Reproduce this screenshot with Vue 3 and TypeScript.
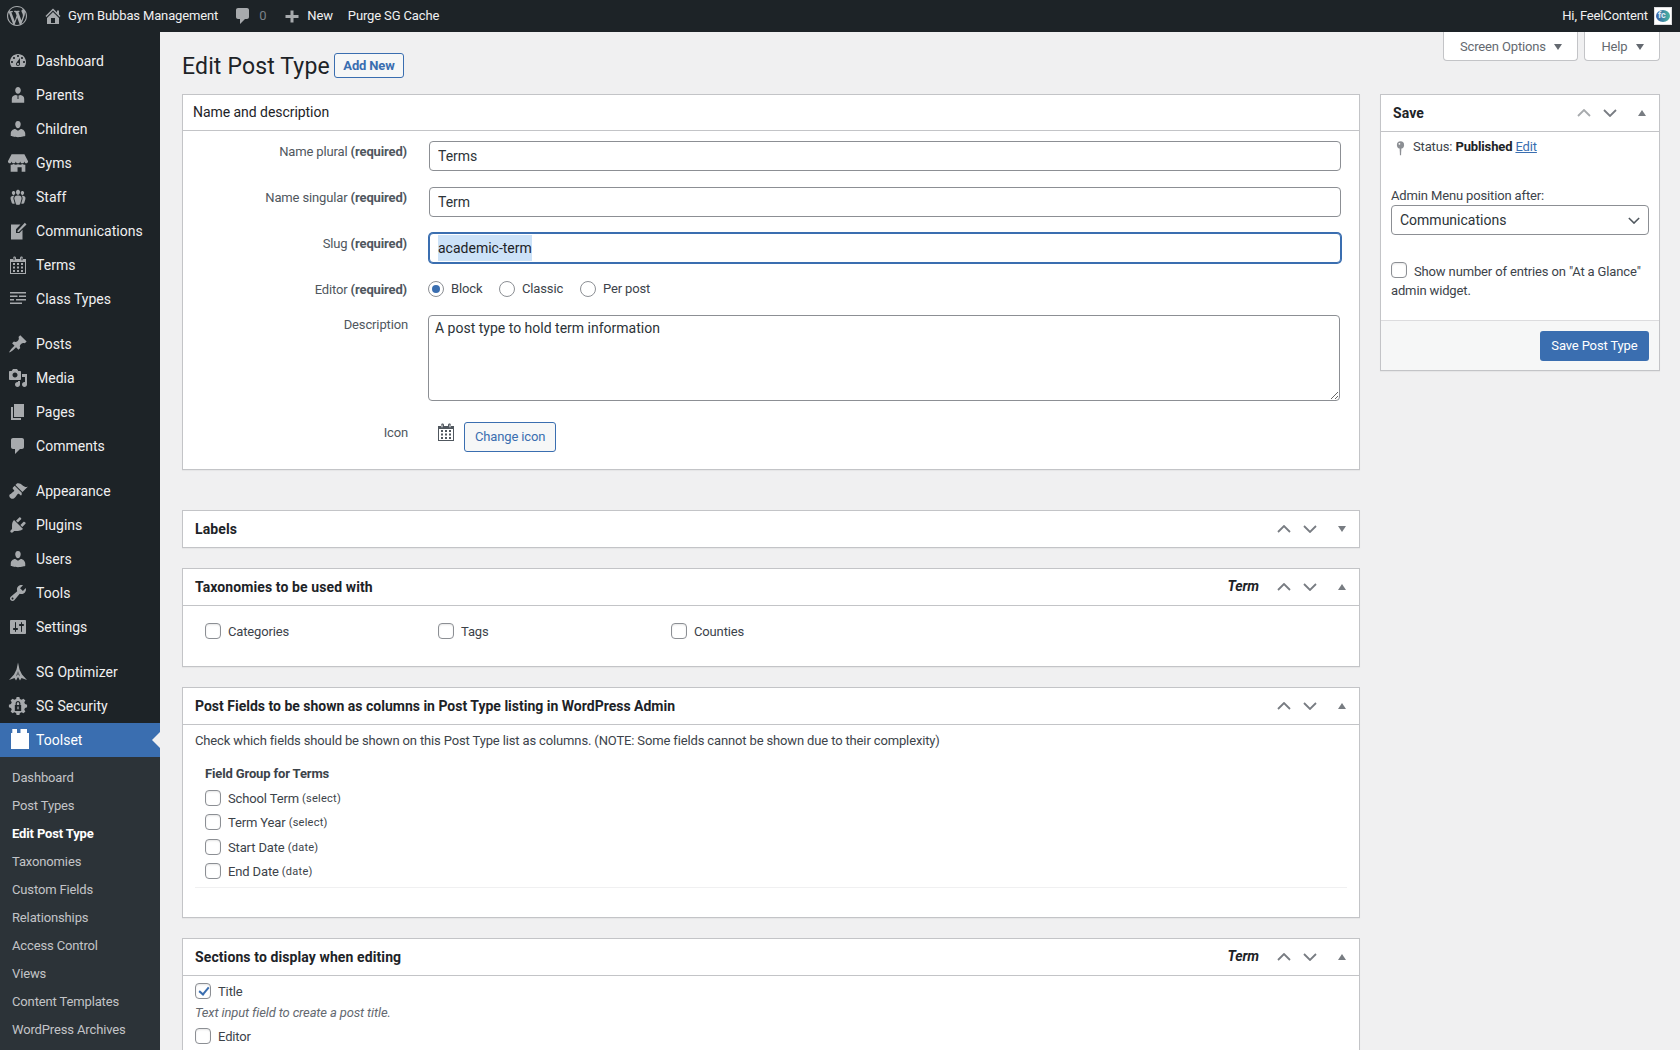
<script setup lang="ts">
interface MenuItem {
  label: string
  d: string
  gap?: boolean
  box?: string
}
const users = 'M10 9.25c-2.27 0-2.73-3.44-2.73-3.44C7 4.02 7.82 2 9.97 2c2.16 0 2.98 2.02 2.71 3.81 0 0-.41 3.44-2.68 3.44zm0 2.57L12.72 10c2.39 0 4.52 2.33 4.52 4.53v2.49s-3.65 1.13-7.24 1.13c-3.65 0-7.24-1.13-7.24-1.13v-2.49c0-2.25 1.94-4.48 4.47-4.48z'
const calendar = 'M15 4h3v15H2V4h3V3c0-.41.15-.76.44-1.06.29-.29.65-.44 1.06-.44s.77.15 1.06.44c.29.3.44.65.44 1.06v1h4V3c0-.41.15-.76.44-1.06.29-.29.65-.44 1.06-.44s.77.15 1.06.44c.29.3.44.65.44 1.06v1zM6 5.5c.28 0 .5-.22.5-.5V3c0-.28-.22-.5-.5-.5s-.5.22-.5.5v2c0 .28.22.5.5.5zm8 0c.28 0 .5-.22.5-.5V3c0-.28-.22-.5-.5-.5s-.5.22-.5.5v2c0 .28.22.5.5.5zM17 18V7H3v11h14zM7 10V8H5v2h2zm4 0V8H9v2h2zm4 0V8h-2v2h2zM7 13.500v-2H5v2h2zm4 0v-2H9v2h2zm4 0v-2h-2v2h2zM7 17v-2H5v2h2zm4 0v-2H9v2h2zm4 0v-2h-2v2h2z'
const comment = 'M5 2h9c1.1 0 2 .9 2 2v7c0 1.1-.9 2-2 2h-2l-5 5v-5H5c-1.1 0-2-.9-2-2V4c0-1.1.9-2 2-2z'
const wp = 'M20 10c0-5.51-4.49-10-10-10C4.48 0 0 4.49 0 10c0 5.52 4.48 10 10 10 5.51 0 10-4.48 10-10zM7.780 15.370L4.370 6.220c.55-.02 1.170-.08 1.170-.08.5-.06.44-1.130-.06-1.110 0 0-1.450.11-2.370.11-.18 0-.37 0-.58-.01C4.120 2.690 6.870 1.110 10 1.110c2.330 0 4.450.87 6.050 2.340-.68-.11-1.650.39-1.650 1.580 0 .74.45 1.360.9 2.100.35.61.55 1.360.55 2.460 0 1.490-1.400 5-1.400 5l-3.030-8.370c.54-.02.82-.17.82-.17.5-.05.44-1.250-.06-1.220 0 0-1.440.12-2.380.12-.87 0-2.330-.12-2.330-.12-.5-.03-.56 1.200-.06 1.220l.92.08 1.260 3.410zM17.410 10c.24-.64.74-1.870.43-4.250.7 1.290 1.050 2.710 1.050 4.250 0 3.290-1.730 6.240-4.400 7.780.97-2.590 1.940-5.200 2.920-7.780zM6.100 18.090C3.120 16.650 1.110 13.530 1.110 10c0-1.300.23-2.480.72-3.590C3.250 10.300 4.670 14.200 6.100 18.090zm4.030-6.630l2.580 6.980c-.86.29-1.760.45-2.710.45-.79 0-1.570-.11-2.290-.33.81-2.380 1.620-4.740 2.420-7.100z'

const menu: MenuItem[] = [
  { label: 'Dashboard', d: 'M3.760 16h12.480c1.100-1.370 1.760-3.110 1.760-5 0-4.420-3.580-8-8-8s-8 3.580-8 8c0 1.890.66 3.630 1.760 5zM10 4c.55 0 1 .45 1 1s-.45 1-1 1-1-.45-1-1 .45-1 1-1zM6 6c.55 0 1 .45 1 1s-.45 1-1 1-1-.45-1-1 .45-1 1-1zm8 0c.55 0 1 .45 1 1s-.45 1-1 1-1-.45-1-1 .45-1 1-1zm-5.370 5.550L12 7v6c0 1.100-.9 2-2 2s-2-.9-2-2c0-.57.24-1.080.63-1.450zM4 10c.55 0 1 .45 1 1s-.45 1-1 1-1-.45-1-1 .45-1 1-1zm12 0c.55 0 1 .45 1 1s-.45 1-1 1-1-.45-1-1 .45-1 1-1zm-5 3c0-.55-.45-1-1-1s-1 .45-1 1 .45 1 1 1 1-.45 1-1z' },
  { label: 'Parents', d: 'M10 8.800c-1.900 0-2.800-1.900-2.800-3.500C7.200 3.500 8.400 2 10 2s2.800 1.500 2.800 3.300c0 1.600-.9 3.500-2.800 3.500zM7.500 10l2 .4v3.600h1v-3.600l2-.4c2.200.3 3.700 1.700 3.700 3.700v4.100H3.800v-4.100c0-2 1.500-3.400 3.700-3.700z' },
  { label: 'Children', d: users },
  { label: 'Gyms', d: 'M5 1h14l4 7.500c0 1.400-.9 2.300-2 2.300s-2-.9-2-2.300c0 1.400-.9 2.300-2.300 2.300S14.400 9.900 14.400 8.500c0 1.400-.9 2.300-2.400 2.300s-2.400-.9-2.400-2.300c0 1.400-.9 2.300-2.300 2.300S5 9.900 5 8.500c0 1.400-.9 2.300-2 2.300S1 9.900 1 8.500zM4 12.300c1.200.3 2.300 0 3.300-.6 1 .7 3 .9 4.700.1 1.700.8 3.700.6 4.700-.1 1 .6 2.100.9 3.300.6V20h-4v-5h-4.500v5H4z', box: '0 0 24 21' },
  { label: 'Staff', d: 'M8.030 4.460c-.29 1.280.55 3.460 1.970 3.460 1.410 0 2.250-2.180 1.960-3.460-.22-.98-1.080-1.630-1.960-1.630-.89 0-1.740.65-1.970 1.630zm-4.130.9c-.25 1.080.47 2.930 1.670 2.930s1.920-1.850 1.670-2.930c-.19-.83-.92-1.390-1.670-1.390s-1.480.56-1.670 1.390zm8.860 0c-.25 1.080.47 2.930 1.660 2.930 1.200 0 1.920-1.850 1.670-2.930-.19-.83-.92-1.390-1.670-1.390-.74 0-1.470.56-1.660 1.390zm-.59 11.430l1.250-4.300C14.200 10 12.710 8.470 10 8.470c-2.720 0-4.210 1.530-3.440 4.020l1.260 4.300C8.050 17.510 9 18 10 18c.98 0 1.940-.49 2.170-1.210zm-6.100-7.630c-.49.67-.96 1.830-.42 3.590l1.120 3.790c-.34.2-.77.31-1.200.31-.85 0-1.650-.41-1.850-1.030l-1.070-3.650c-.65-2.110.61-3.400 2.920-3.400.27 0 .54.02.79.06-.1.1-.2.22-.29.33zm8.350-.39c2.310 0 3.580 1.290 2.920 3.400l-1.070 3.650c-.2.62-1 1.030-1.850 1.030-.43 0-.86-.11-1.200-.31l1.110-3.790c.55-1.760.08-2.920-.41-3.590-.09-.11-.19-.23-.29-.33.25-.04.52-.06.79-.06z' },
  { label: 'Communications', d: 'M3 3.500h9.500L8 8.300V12h3.500L14.500 8.800V18.500H3zM9.500 9.800L16.800 1.800 18.500 3.500 10.800 11H9.500z' },
  { label: 'Terms', d: calendar },
  { label: 'Class Types', d: 'M2 3h16v1.500H2zM2 6.500h7.500V8H2zM11 6.500h7V8h-7zM2 10h4v1.500H2zM8 10h10v1.500H8zM2 13.500h12V15H2z' },
  { label: 'Posts', gap: true, d: 'M10.440 3.020l1.820-1.820 6.360 6.350-1.830 1.820c-1.050-.68-2.480-.57-3.410.36l-.75.75c-.92.93-1.040 2.350-.35 3.410l-1.830 1.820-2.410-2.410-2.800 2.790c-.42.42-3.380 2.710-3.800 2.290s1.860-3.390 2.280-3.810l2.790-2.790L4.100 9.360l1.830-1.820c1.050.69 2.480.57 3.400-.36l.75-.75c.93-.92 1.050-2.350.36-3.410z' },
  { label: 'Media', d: 'M13 11V4c0-.55-.45-1-1-1h-1.670L9 1H5L3.670 3H2c-.55 0-1 .45-1 1v7c0 .55.45 1 1 1h10c.55 0 1-.45 1-1zM7 4.500c1.380 0 2.500 1.120 2.500 2.500S8.380 9.500 7 9.500 4.500 8.380 4.500 7 5.620 4.500 7 4.500zM14 6h5v10.500c0 1.380-1.120 2.500-2.500 2.500S14 17.880 14 16.500s1.120-2.500 2.500-2.500c.17 0 .34.02.5.05V9h-3V6zm-4 8.050V13h2v3.500c0 1.380-1.120 2.500-2.500 2.500S7 17.880 7 16.500 8.120 14 9.500 14c.17 0 .34.02.5.05z' },
  { label: 'Pages', d: 'M6 15V2h10v13H6zm-1 1h8v2H3V5h2v11z' },
  { label: 'Comments', d: comment },
  { label: 'Appearance', gap: true, d: 'M14.480 11.060L7.410 3.990l1.500-1.500c.5-.56 2.300-.47 3.510.32 1.210.8 1.430 1.280 2.910 2.100 1.180.64 2.450 1.260 4.450.85zm-.71.71L6.700 4.700 4.930 6.470c-.39.39-.39 1.020 0 1.410l1.060 1.060c.39.39.39 1.030 0 1.420-.6.6-1.430 1.110-2.210 1.690-.35.26-.7.53-1.010.84C1.430 13.230 1 14.180 1.420 15.600c.28.96 1.120 1.780 2.090 2.050 1.350.38 2.360-.03 3.710-1.370.32-.32.59-.66.85-1.010.58-.78 1.090-1.610 1.690-2.210.39-.39 1.030-.39 1.420 0l1.060 1.060c.39.39 1.020.39 1.410 0z' },
  { label: 'Plugins', d: 'M13.110 4.360L9.870 7.600 8 5.730l3.240-3.240c.35-.34 1.050-.2 1.560.32.52.51.66 1.210.31 1.550zm-8 1.770l.91-1.120 9.010 9.010-1.190.84c-.71.71-2.630 1.160-3.820 1.160H6.140L4.900 17.260c-.59.59-1.540.59-2.120 0-.59-.58-.59-1.530 0-2.120l1.240-1.240v-3.880c0-1.130.4-3.190 1.090-3.890zm7.260 3.970l3.240-3.240c.34-.35 1.040-.21 1.550.31.52.51.66 1.210.31 1.550l-3.240 3.250z' },
  { label: 'Users', d: users },
  { label: 'Tools', d: 'M16.680 9.770c-1.340 1.340-3.300 1.670-4.950.99l-5.410 6.520c-.99.99-2.590.99-3.580 0s-.99-2.590 0-3.570l6.520-5.420c-.68-1.650-.35-3.610.99-4.950 1.280-1.280 3.120-1.620 4.720-1.060l-2.890 2.890 2.820 2.820 2.860-2.870c.53 1.580.18 3.390-1.080 4.670zM3.810 16.210c.4.39 1.040.39 1.430 0 .4-.4.4-1.040 0-1.430-.39-.4-1.030-.4-1.430 0-.39.39-.39 1.030 0 1.430z' },
  { label: 'Settings', d: 'M18 16V4c0-.55-.45-1-1-1H3c-.55 0-1 .45-1 1v12c0 .55.45 1 1 1h14c.55 0 1-.45 1-1zM8 11h1c.55 0 1 .45 1 1s-.45 1-1 1H8v1.500c0 .28-.22.5-.5.5s-.5-.22-.5-.5V13H6c-.55 0-1-.45-1-1s.45-1 1-1h1V5.500c0-.28.22-.5.5-.5s.5.22.5.5V11zm5-2h-1c-.55 0-1-.45-1-1s.45-1 1-1h1V5.500c0-.28.22-.5.5-.5s.5.22.5.5V7h1c.55 0 1 .45 1 1s-.45 1-1 1h-1v5.500c0 .28-.22.5-.5.5s-.5-.22-.5-.5V9z' },
  { label: 'SG Optimizer', gap: true, d: 'M10 .5l1.500 7 2.500 5 5 5.500-5.500-2-1.500 2.500-2-3.500-2 3.500-1.500-2.500L1 18l5-5.500 2.500-5zM9.500 9L8.300 14.500l1.200-1.800zM10.500 9L11.700 14.500l-1.200-1.800z' },
  { label: 'SG Security', box: '0 0 22 22', d: 'M9.500 1h3l.6 2.300 1.900.8 2-1.200 2.100 2.100-1.200 2 .8 1.900 2.300.6v3l-2.300.6-.8 1.900 1.200 2-2.100 2.100-2-1.200-1.900.8-.6 2.300h-3l-.6-2.300-1.900-.8-2 1.200-2.100-2.100 1.200-2-.8-1.900L1 12.500v-3l2.300-.6.8-1.900-1.200-2L5 2.900l2 1.200 1.900-.8zM11 5.500c-1.500 0-2.600 1.100-2.600 2.600V10H7.500v6.500h7V10h-.9V8.100c0-1.500-1.100-2.600-2.600-2.600zm0 1.300c.8 0 1.300.5 1.300 1.300V10H9.700V8.100c0-.8.5-1.300 1.300-1.300zm-.7 4.800h1.400v3h-1.400z' }
]
const submenu = ['Dashboard', 'Post Types', 'Edit Post Type', 'Taxonomies', 'Custom Fields', 'Relationships', 'Access Control', 'Views', 'Content Templates', 'WordPress Archives']
const fieldRows = [
  { name: 'School Term', type: 'select', cls: 'f1' },
  { name: 'Term Year', type: 'select', cls: 'f2' },
  { name: 'Start Date', type: 'date', cls: 'f3' },
  { name: 'End Date', type: 'date', cls: 'f4' }
]
const taxonomies = ['Categories', 'Tags', 'Counties']
</script>

<template>
  <div class="page">
    <header class="bar">
      <svg class="wp" viewBox="0 0 20 20"><path fill-rule="evenodd" :d="wp" /></svg>
      <svg class="bi home" viewBox="0 0 20 20"><path fill-rule="evenodd" d="M16 8.500l1.530 1.530-1.060 1.060L10 4.620l-6.470 6.470-1.060-1.060L10 2.500l4 4v-2h2v4zm-6-2.460l6 5.990V18H4v-5.970zM12 17v-5H8v5h4z" /></svg>
      <span class="site">Gym Bubbas Management</span>
      <svg class="bi cm" viewBox="0 0 20 20"><path :d="comment" /></svg>
      <span class="count">0</span>
      <svg class="bi plus" viewBox="0 0 20 20"><path d="M16.500 9v3h-5v4.500h-3V12h-5V9h5V4.500h3V9z" /></svg>
      <span class="new">New</span>
      <span class="purge">Purge SG Cache</span>
      <span class="hi">Hi, FeelContent</span>
      <span class="avatar"><span class="blob"></span><span class="fc">fc</span></span>
    </header>

    <div class="below">
      <nav class="side">
        <ul class="menu">
          <li v-for="m in menu" :key="m.label" class="mi" :class="{ gap: m.gap }">
            <span class="ic"><svg :viewBox="m.box || '0 0 20 20'" :class="{ wide: m.box }"><path fill-rule="evenodd" :d="m.d" /></svg></span>
            <span class="ml">{{ m.label }}</span>
          </li>
          <li class="mi active">
            <span class="ic"><svg viewBox="0 0 24 24" class="big"><path d="M5 5h1.300V1H11v4h3.500V1H21v4h2v16H5z" /></svg></span>
            <span class="ml">Toolset</span>
          </li>
        </ul>
        <ul class="sub">
          <li v-for="s in submenu" :key="s" :class="{ cur: s === 'Edit Post Type' }">{{ s }}</li>
        </ul>
      </nav>

      <main class="main">
        <div class="links">
          <span class="tab">Screen Options <i class="tri"></i></span>
          <span class="tab">Help <i class="tri"></i></span>
        </div>
        <div class="title">
          <h1>Edit Post Type</h1>
          <span class="addnew">Add New</span>
        </div>

        <div class="cols">
          <div class="left">
            <section class="box first">
              <div class="plain-h">Name and description</div>
              <div class="form">
                <div class="row">
                  <label>Name plural <b>(required)</b></label>
                  <input class="inp" value="Terms" />
                </div>
                <div class="row">
                  <label>Name singular <b>(required)</b></label>
                  <input class="inp" value="Term" />
                </div>
                <div class="row">
                  <label>Slug <b>(required)</b></label>
                  <div class="inp focus"><span class="sel">academic-term</span></div>
                </div>
                <div class="row radios">
                  <label>Editor <b>(required)</b></label>
                  <div class="radio-set">
                    <span class="r r1"><input type="radio" name="ed" checked />Block</span>
                    <span class="r r2"><input type="radio" name="ed" />Classic</span>
                    <span class="r"><input type="radio" name="ed" />Per post</span>
                  </div>
                </div>
                <div class="row">
                  <label class="tight">Description</label>
                  <textarea class="ta" rows="4">A post type to hold term information</textarea>
                </div>
                <div class="row icon-row">
                  <label class="tight">Icon</label>
                  <svg class="cal" viewBox="0 0 20 20"><path fill-rule="evenodd" :d="calendar" /></svg>
                  <span class="change">Change icon</span>
                </div>
              </div>
            </section>

            <section class="box">
              <div class="bh">
                <h2>Labels</h2>
                <div class="hnd">
                  <svg class="ch" viewBox="0 0 14 8"><path d="M1 7l6-6 6 6" /></svg>
                  <svg class="ch" viewBox="0 0 14 8"><path d="M1 1l6 6 6-6" /></svg>
                  <i class="t down"></i>
                </div>
              </div>
            </section>

            <section class="box">
              <div class="bh line">
                <h2>Taxonomies to be used with</h2>
                <em>Term</em>
                <div class="hnd">
                  <svg class="ch" viewBox="0 0 14 8"><path d="M1 7l6-6 6 6" /></svg>
                  <svg class="ch" viewBox="0 0 14 8"><path d="M1 1l6 6 6-6" /></svg>
                  <i class="t up"></i>
                </div>
              </div>
              <div class="tax">
                <span v-for="t in taxonomies" :key="t" class="taxi"><input type="checkbox" class="ck" />{{ t }}</span>
              </div>
            </section>

            <section class="box">
              <div class="bh line">
                <h2 class="flat">Post Fields to be shown as columns in Post Type listing in WordPress Admin</h2>
                <div class="hnd">
                  <svg class="ch" viewBox="0 0 14 8"><path d="M1 7l6-6 6 6" /></svg>
                  <svg class="ch" viewBox="0 0 14 8"><path d="M1 1l6 6 6-6" /></svg>
                  <i class="t up"></i>
                </div>
              </div>
              <div class="pf">
                <p class="note">Check which fields should be shown on this Post Type list as columns. (NOTE: Some fields cannot be shown due to their complexity)</p>
                <h4>Field Group for Terms</h4>
                <div v-for="f in fieldRows" :key="f.name" class="fr" :class="f.cls">
                  <input type="checkbox" class="ck" />{{ f.name }}&nbsp;<small>({{ f.type }})</small>
                </div>
                <div class="rule"></div>
              </div>
            </section>

            <section class="box last">
              <div class="bh line">
                <h2>Sections to display when editing</h2>
                <em>Term</em>
                <div class="hnd">
                  <svg class="ch" viewBox="0 0 14 8"><path d="M1 7l6-6 6 6" /></svg>
                  <svg class="ch" viewBox="0 0 14 8"><path d="M1 1l6 6 6-6" /></svg>
                  <i class="t up"></i>
                </div>
              </div>
              <div class="sec">
                <div class="sr"><input type="checkbox" class="ck" checked />Title</div>
                <p class="hint">Text input field to create a post title.</p>
                <div class="sr"><input type="checkbox" class="ck" />Editor</div>
              </div>
            </section>
          </div>

          <aside class="right">
            <section class="box save">
              <div class="bh line">
                <h2>Save</h2>
                <div class="hnd">
                  <svg class="ch off" viewBox="0 0 14 8"><path d="M1 7l6-6 6 6" /></svg>
                  <svg class="ch" viewBox="0 0 14 8"><path d="M1 1l6 6 6-6" /></svg>
                  <i class="t up"></i>
                </div>
              </div>
              <div class="sb">
                <div class="status">
                  <svg class="pin" viewBox="0 0 10 16"><circle cx="5" cy="4" r="4" /><circle cx="3.800" cy="2.800" r="1" fill="#fff" /><path d="M4 7h2l-.4 8.500h-1.200z" /></svg>
                  <span>Status: <b>Published</b> <a>Edit</a></span>
                </div>
                <div class="amp">Admin Menu position after:</div>
                <div class="selwrap">
                  <select class="select"><option>Communications</option></select>
                  <svg class="sc" viewBox="0 0 14 8"><path d="M1 1l6 6 6-6" /></svg>
                </div>
                <div class="glance"><input type="checkbox" class="ck" /><span>Show number of entries on "At a Glance" admin widget.</span></div>
              </div>
              <div class="foot"><span class="primary">Save Post Type</span></div>
            </section>
          </aside>
        </div>
      </main>
    </div>
  </div>
</template>

<style>
html, body { margin: 0; padding: 0; background: #f0f0f1; }
</style>

<style scoped>
.page {
  width: 1680px; height: 1050px; overflow: hidden; background: #f0f0f1;
  font-family: Roboto, "Liberation Sans", sans-serif; font-size: 13px; line-height: 1.4; color: #3c434a;
  letter-spacing: -0.14px;
}
ul { list-style: none; margin: 0; padding: 0; }

.bar { height: 32px; background: #1d2327; color: #f0f0f1; display: flex; align-items: center; position: relative; }
.bar svg { fill: #a7aaad; display: block; flex: none; }
.wp { width: 20px; height: 20px; margin-left: 7px; }
.bi { width: 20px; height: 20px; }
.home { margin-left: 16px; }
.site { margin-left: 5px; }
.cm { margin-left: 15px; }
.count { margin-left: 6px; color: #7b8187; }
.plus { margin-left: 16px; }
.new { margin-left: 5px; }
.purge { margin-left: 15px; }
.hi { margin-left: auto; }
.avatar { width: 16px; height: 16px; border: 1px solid #dcdcde; background: #fff; margin: 0 8px 0 6px; position: relative; overflow: hidden; }
.blob { position: absolute; left: 1px; top: 2px; width: 14px; height: 12px; border-radius: 50%; background: linear-gradient(90deg, #3a5fa8, #47b5a0); }
.fc { position: absolute; left: 3px; top: 2px; font-size: 9px; line-height: 11px; color: #dfe8f2; font-weight: 700; }

.below { display: flex; height: 1018px; }
.side { width: 160px; flex: none; background: #1d2327; padding-top: 12px; box-sizing: border-box; overflow: hidden; }
.mi { height: 34px; display: flex; align-items: center; color: #f0f0f1; font-size: 14px; position: relative; letter-spacing: 0.02px; }
.ml { padding-top: 2px; }
.mi.gap { margin-top: 11px; }
.ic { width: 36px; height: 34px; display: flex; align-items: center; justify-content: center; flex: none; }
.ic svg { width: 20px; height: 20px; fill: #a7aaad; display: block; flex: none; }
.ic svg.wide { width: 22px; height: 20px; }
.ic svg.big { width: 24px; height: 24px; }
.mi.active { background: #3a6eb0; color: #fff; }
.mi.active .ic svg { fill: #fff; }
.mi.active::after {
  content: ""; position: absolute; right: 0; top: 9px;
  border: 8px solid transparent; border-right-color: #f0f0f1; border-left: 0;
}
.sub { background: #2c3338; padding: 7px 0; }
.sub li { height: 28px; line-height: 28px; padding-left: 12px; color: #c3c4c7; }
.sub li.cur { color: #fff; font-weight: 700; }

.main { flex: 1; padding: 0 20px 0 22px; min-width: 0; }
.links { float: right; display: flex; gap: 6px; height: 29px; }
.tab {
  height: 29px; line-height: 28px; background: #fff; border: 1px solid #c3c4c7; border-top: 0; box-sizing: border-box;
  border-radius: 0 0 4px 4px; padding: 1px 15.500px 0 16px; color: #646970; display: flex; align-items: center; gap: 8px;
}
.tri { width: 0; height: 0; border: 4px solid transparent; border-top: 6px solid #646970; border-bottom: 0; }
.title { display: flex; align-items: center; padding-top: 18px; height: 30px; margin-bottom: 14px; }
h1 { font-size: 23px; font-weight: 400; line-height: 30px; margin: 0 0 -2px; padding-top: 2px; color: #1d2327; letter-spacing: 0.15px; }
.addnew {
  margin-left: 4px; height: 23px; line-height: 23px; padding: 0 8.500px; border: 1px solid #3a6eb0; border-radius: 3px;
  background: #f6f7f7; color: #3a6eb0; font-weight: 700;
}
.cols { display: grid; grid-template-columns: 1178px 280px; gap: 20px; align-items: start; }

.box { background: #fff; border: 1px solid #c3c4c7; box-shadow: 0 1px 1px rgba(0,0,0,.04); margin-bottom: 20px; }
.box.first { margin-bottom: 40px; }
.plain-h { height: 35px; line-height: 35px; padding-left: 10px; font-size: 14px; color: #1d2327; border-bottom: 1px solid #c3c4c7; letter-spacing: -0.05px; }
.form { padding: 10px 18px 17px 0; }
.row { display: flex; align-items: flex-start; margin-bottom: 16px; }
.row.radios { margin-bottom: 15px; }
.row:last-child { margin-bottom: 0; }
.row label { width: 224px; text-align: right; margin-right: 22px; padding-top: 1px; flex: none; line-height: 20px; color: #50575e; }
.row label.tight { margin-right: 20px; width: 225px; padding-top: 0; }
.row label b { font-weight: 700; color: #50575e; }
.inp {
  box-sizing: border-box; flex: 1; height: 30px; border: 1px solid #8c8f94; border-radius: 4px; padding: 0 8px;
  font: 14px/28px Roboto, sans-serif; letter-spacing: 0; color: #2c3338; background: #fff; outline: 0; margin: 0; min-width: 0;
}
.inp.focus { border-color: #3a6eb0; box-shadow: 0 0 0 1px #3a6eb0; color: #1d2327; }
.sel { display: inline-block; background: #cce2f8; height: 26px; line-height: 27px; vertical-align: top; margin-top: 1px; }
.radio-set { display: flex; margin-left: -1px; height: 20px; align-items: center; }
.r { display: inline-flex; align-items: center; line-height: 20px; }
.r input {
  appearance: none; width: 16px; height: 16px; margin: -1px 7px 0 0; border: 1px solid #8c8f94; border-radius: 50%;
  background: #fff; box-sizing: border-box; position: relative; flex: none;
}
.r input:checked::before {
  content: ""; position: absolute; left: 3px; top: 3px; width: 8px; height: 8px; border-radius: 50%; background: #3a6eb0;
}
.r1 { width: 71px; }
.r2 { width: 81px; }
.ta {
  flex: 1; box-sizing: border-box; height: 86px; margin: 0 1px 0 0; border: 1px solid #8c8f94; border-radius: 4px; padding: 2px 6px;
  font: 14px/20px Roboto, sans-serif; letter-spacing: 0; color: #2c3338; resize: both; outline: 0; background: #fff;
}
.icon-row { margin-top: 21px; height: 30px; }
.icon-row label.tight { padding-top: 1px; }
.cal { width: 20px; height: 20px; fill: #50575e; margin-left: 8px; flex: none; }
.change {
  margin-left: 8px; height: 28px; line-height: 28px; padding: 0 10px; border: 1px solid #3a6eb0; border-radius: 3px;
  background: #f6f7f7; color: #3a6eb0;
}

.bh { height: 36px; display: flex; align-items: center; padding-left: 12px; box-sizing: border-box; position: relative; }
.bh.line { border-bottom: 1px solid #c3c4c7; height: 37px; }
.bh h2 { font-size: 14px; font-weight: 700; line-height: 20px; margin: 0; color: #1d2327; letter-spacing: 0.1px; }
.bh h2.flat { letter-spacing: 0; }
.bh em { margin-left: auto; font-size: 14px; letter-spacing: -0.1px; font-weight: 700; color: #1d2327; margin-right: 8px; }
.hnd { display: flex; align-items: center; margin-left: auto; width: 92px; flex: none; height: 36px; }
.bh em + .hnd { margin-left: 0; }
.ch { width: 14px; height: 8px; fill: none; stroke: #787c82; stroke-width: 1.800; margin-left: 12px; flex: none; }
.ch:first-child { margin-left: 10px; }
.ch.off { stroke: #a7aaad; }
.t { width: 0; height: 0; border: 4px solid transparent; margin-left: 21px; flex: none; }
.t.down { border-top: 6px solid #787c82; border-bottom: 0; }
.t.up { border-bottom: 6px solid #787c82; border-top: 0; }

.ck {
  appearance: none; width: 16px; height: 16px; box-sizing: border-box; margin: 0; border: 1px solid #8c8f94; border-radius: 4px;
  background: #fff; flex: none; position: relative; box-shadow: inset 0 1px 2px rgba(0,0,0,.1);
}
.ck:checked::before {
  content: ""; position: absolute; left: 4.500px; top: 1px; width: 4px; height: 8px;
  border: solid #3a6eb0; border-width: 0 2.500px 2.500px 0; transform: rotate(40deg);
}
.tax { display: flex; padding: 15px 22px 23px; height: 22px; align-items: center; }
.taxi { width: 233px; display: inline-flex; align-items: center; gap: 7px; line-height: 20px; }
.taxi .ck { margin-top: -2px; }
.pf { padding: 7px 12px 29px; }
.note { margin: 0; line-height: 18px; }
h4 { margin: 15px 0 0 10px; font-size: 13px; font-weight: 700; line-height: 18px; color: #3c434a; }
.fr { display: flex; align-items: center; margin-left: 10px; height: 24px; line-height: 20px; }
.fr .ck { margin-right: 7px; margin-top: -2px; }
.fr small { font-size: 11px; letter-spacing: 0.25px; }
.f1 { margin-top: 4px; }
.f3 { margin-top: 1px; }
.rule { margin-top: 3px; border-top: 1px solid #f0f0f1; }
.sec { padding: 6px 12px 20px; }
.sr { display: flex; align-items: center; gap: 7px; height: 20px; }
.sr .ck { margin-top: -2px; }
.hint { margin: 2px 0 5px; font-style: italic; color: #646970; line-height: 18px; }

.save { margin: 0; }
.sb { padding: 5px 10px 0; height: 188px; box-sizing: border-box; position: relative; }
.status { display: flex; align-items: center; line-height: 20px; padding-left: 5px; gap: 8px; }
.status b { font-weight: 700; color: #1d2327; }
.status a { color: #3a6eb0; text-decoration: underline; }
.pin { width: 9px; height: 15px; fill: #8c8f94; flex: none; margin-top: 2px; }
.amp { margin-top: 30px; line-height: 18px; }
.selwrap { position: relative; margin-top: 0; height: 30px; }
.select {
  appearance: none; width: 100%; height: 30px; box-sizing: border-box; border: 1px solid #8c8f94; border-radius: 4px; background: #fff;
  font: 14px Roboto, sans-serif; color: #2c3338; padding: 0 24px 0 8px; margin: 0; outline: 0; display: block;
}
.sc { position: absolute; right: 9px; top: 12px; width: 12px; height: 7px; fill: none; stroke: #50575e; stroke-width: 1.800; }
.glance { margin-top: 27px; line-height: 19px; }
.glance .ck { vertical-align: -2px; margin-right: 7px; display: inline-block; }
.foot {
  height: 50px; box-sizing: border-box; background: #f6f7f7; border-top: 1px solid #dcdcde; padding: 10px 10px 0;
  display: flex; justify-content: flex-end;
}
.primary { height: 30px; line-height: 30px; padding: 0 11.500px; border-radius: 3px; background: #3a6eb0; color: #fff; }
</style>
